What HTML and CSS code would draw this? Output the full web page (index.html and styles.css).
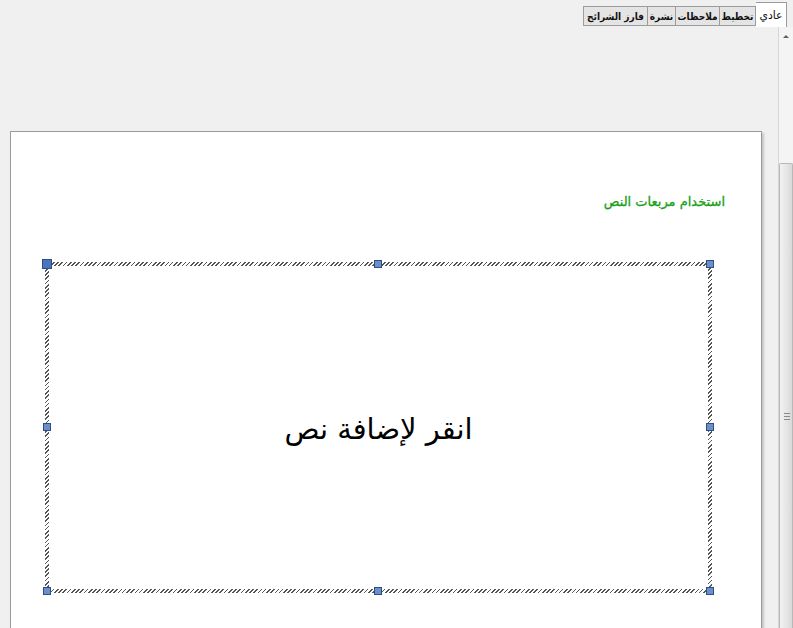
FILE: index.html
```html
<!DOCTYPE html>
<html lang="ar">
<head>
<meta charset="utf-8">
<link rel="stylesheet" href="styles.css">
</head>
<body>
<div class="app">
  <div class="tabbar">
    <div class="tab active w1">عادي</div>
    <div class="tab w2">تخطيط</div>
    <div class="tab w3">ملاحظات</div>
    <div class="tab w4">نشرة</div>
    <div class="tab w5">فارز الشرائح</div>
  </div>
  <div class="main">
    <div class="workspace">
      <div class="slide">
        <div class="title">استخدام مربعات النص</div>
        <div class="placeholder">
          <div class="inner">انقر لإضافة نص</div>
          <span class="h big tl"></span>
          <span class="h tc"></span>
          <span class="h tr"></span>
          <span class="h ml"></span>
          <span class="h mr"></span>
          <span class="h bl"></span>
          <span class="h bc"></span>
          <span class="h br"></span>
        </div>
      </div>
    </div>
    <div class="vscroll">
      <div class="arrow"></div>
      <div class="thumb"><div class="grip"></div></div>
    </div>
  </div>
</div>
</body>
</html>
```
FILE: styles.css
```css
html, body {
  margin: 0;
  padding: 0;
  background: #f0f0f0;
  font-family: "DejaVu Sans", "Noto Sans", sans-serif;
}
.app {
  width: 793px;
  height: 628px;
  overflow: hidden;
  display: flex;
  flex-direction: column;
}
.tabbar {
  height: 27px;
  display: flex;
  flex-direction: row-reverse;
  align-items: flex-end;
  padding-right: 6px;
  flex-shrink: 0;
}
.tab {
  box-sizing: border-box;
  height: 20px;
  margin-bottom: 1px;
  border: 1px solid #9c9c9c;
  border-left: none;
  background: #e4e4e4;
  font-family: "DejaVu Sans Condensed", "DejaVu Sans", sans-serif;
  font-stretch: condensed;
  font-size: 10px;
  font-weight: bold;
  letter-spacing: -0.2px;
  color: #111;
  display: flex;
  align-items: center;
  justify-content: center;
  white-space: nowrap;
  overflow: hidden;
  direction: rtl;
}
.tab.w5 { border-left: 1px solid #9c9c9c; }
.tab.active {
  height: 25px;
  margin-bottom: 0;
  background: #fff;
  border-bottom: none;
  font-size: 12px;
  font-weight: normal;
  letter-spacing: 0;
}
.w1 { width: 31px; }
.w2 { width: 36px; }
.w3 { width: 44px; }
.w4 { width: 28px; }
.w5 { width: 65px; }
.main {
  flex: 1;
  display: flex;
  min-height: 0;
}
.workspace {
  width: 778px;
  flex-shrink: 0;
  overflow: hidden;
}
.slide {
  box-sizing: border-box;
  position: relative;
  margin: 104px 0 0 10px;
  width: 752px;
  height: 600px;
  background: #fff;
  border: 1px solid #9a9a9a;
  box-shadow: 2px 2px 2px rgba(0,0,0,0.18);
  padding: 58px 36px 0 34px;
}
.title {
  direction: rtl;
  text-align: right;
  color: #18a018;
  font-size: 13px;
  font-weight: normal;
  height: 24px;
  line-height: 24px;
  font-family: "DejaVu Sans", sans-serif;
  -webkit-text-stroke: 0.3px #18a018;
}
.placeholder {
  position: relative;
  box-sizing: border-box;
  margin-top: 48px;
  width: 667px;
  height: 331px;
  padding: 4px;
  background: repeating-linear-gradient(135deg, #555 0 1.2px, #ffffff 1.2px 3px);
}
.inner {
  width: 100%;
  height: 100%;
  background: #fff;
  display: flex;
  align-items: center;
  justify-content: center;
  direction: rtl;
  font-size: 29px;
  color: #000;
  padding-top: 2px;
  box-sizing: border-box;
}
.h {
  position: absolute;
  width: 6px;
  height: 6px;
  background: #6d8fc7;
  border: 1px solid #2e4f86;
}
.h.big {
  width: 8px;
  height: 8px;
  background: #4a74c0;
}
.tl { left: -3px; top: -3px; }
.tc { left: 329px; top: -2px; }
.tr { right: -2px; top: -2px; }
.ml { left: -2px; top: 161px; }
.mr { right: -2px; top: 161px; }
.bl { left: -2px; bottom: -2px; }
.bc { left: 329px; bottom: -2px; }
.br { right: -2px; bottom: -2px; }
.vscroll {
  flex: 1;
  border-left: 1px solid #d6d6d6;
  background: #f4f4f4;
  display: flex;
  flex-direction: column;
  align-items: stretch;
}
.arrow {
  height: 136px;
  position: relative;
  flex-shrink: 0;
}
.arrow::after {
  content: "";
  position: absolute;
  left: 4px;
  top: 8px;
  border-left: 3px solid transparent;
  border-right: 3px solid transparent;
  border-bottom: 3px solid #606060;
}
.thumb {
  flex: 1;
  box-sizing: border-box;
  border: 1px solid #b8b8b8;
  border-bottom: none;
  border-radius: 2px 2px 0 0;
  background: linear-gradient(to right, #f2f2f2, #e4e4e4 60%, #d8d8d8);
  position: relative;
}
.grip {
  position: absolute;
  left: 4px;
  top: 249px;
  width: 6px;
  height: 7px;
  background: repeating-linear-gradient(to bottom, #8a8a8a 0 1px, transparent 1px 3px);
}
```
